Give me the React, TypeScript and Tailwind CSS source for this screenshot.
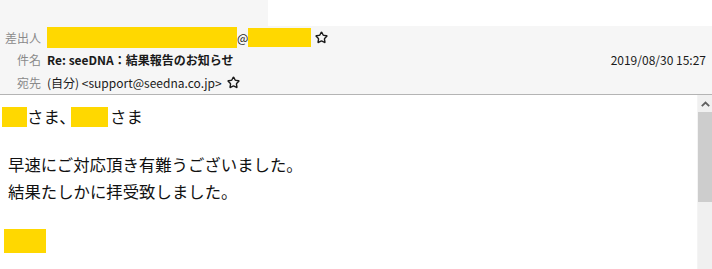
import { Star } from 'lucide-react';

const jp = { fontFamily: '"Noto Sans CJK JP", "Noto Sans", sans-serif' };

function Redacted({ className }: { className: string }) {
  return <span className={`inline-block bg-[#ffd800] ${className}`} />;
}

function HeaderRow({ label, children, className = '' }: { label: string; children: React.ReactNode; className?: string }) {
  return (
    <div className={`flex items-center ${className}`}>
      <div className="w-[41px] shrink-0 text-right text-[#8a8a8a]">{label}</div>
      <div className="ml-[6px] flex flex-1 items-center">{children}</div>
    </div>
  );
}

export default function App() {
  return (
    <div className="flex h-[269px] w-[712px] flex-col overflow-hidden bg-white text-[12px] text-[#1a1a1a]" style={jp}>
      {/* top strip */}
      <div className="flex h-[26px] shrink-0">
        <div className="w-[268px] bg-[#f6f6f6]" />
        <div className="flex-1 bg-white" />
      </div>

      {/* header */}
      <div className="shrink-0 border-b border-[#b4b4b4] bg-[#f6f6f6] pr-[6px]">
        <HeaderRow label="差出人" className="h-[23px]">
          <Redacted className="h-[21px] w-[190px]" />
          <span className="w-[11px] text-[12px]">@</span>
          <Redacted className="h-[19px] w-[63px]" />
          <Star className="ml-[4px] h-[13px] w-[13px]" strokeWidth={2.6} />
        </HeaderRow>
        <HeaderRow label="件名" className="h-[22px]">
          <span className="font-bold">Re: seeDNA：結果報告のお知らせ</span>
          <span className="ml-auto">2019/08/30 15:27</span>
        </HeaderRow>
        <HeaderRow label="宛先" className="h-[23px]">
          <span>(自分) &lt;support@seedna.co.jp&gt;</span>
          <Star className="ml-[5px] h-[13px] w-[13px]" strokeWidth={2.6} />
        </HeaderRow>
      </div>

      {/* body */}
      <div className="flex min-h-0 flex-1">
        <div className="flex-1 pt-[8px] text-[16.4px] leading-[27px] text-[#111]">
          <div className="flex items-center pl-[2px]">
            <Redacted className="h-[20px] w-[25px] shrink-0" />
            <span className="w-[44px] shrink-0 whitespace-nowrap">さま、</span>
            <Redacted className="h-[20px] w-[37px] shrink-0" />
            <span className="ml-[2px]">さま</span>
          </div>
          <div className="mt-[21px] pl-[8px]">早速にご対応頂き有難うございました。</div>
          <div className="pl-[8px]">結果たしかに拝受致しました。</div>
          <div className="mt-[24px] pl-[4px]">
            <Redacted className="h-[24px] w-[42px] align-top" />
          </div>
        </div>

        {/* scrollbar */}
        <div className="flex w-[15px] shrink-0 flex-col border-l border-[#f4f4f4] bg-[#f0f0f0]">
          <div className="flex h-[17px] items-center justify-center">
            <svg width="9" height="6" viewBox="0 0 9 6">
              <path d="M0.8 5.2 L4.5 1.5 L8.2 5.2" fill="none" stroke="#606060" strokeWidth="1.8" />
            </svg>
          </div>
          <div className="h-[90px] bg-[#cdcdcd]" />
        </div>
      </div>
    </div>
  );
}
